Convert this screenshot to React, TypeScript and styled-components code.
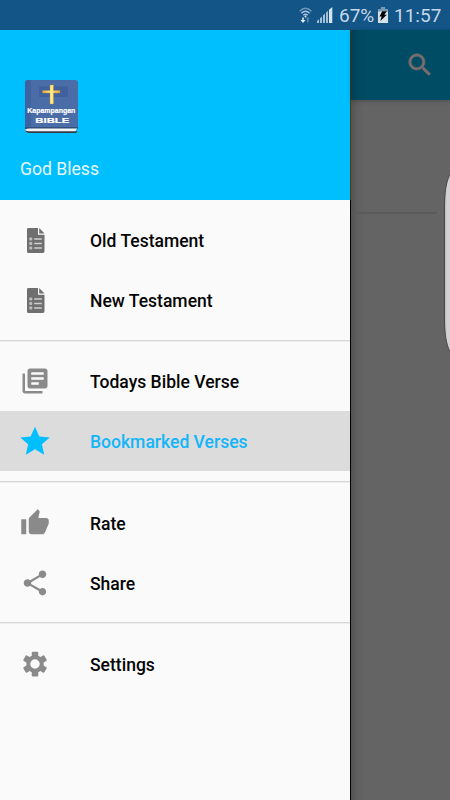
import React from 'react';
import styled, { createGlobalStyle } from 'styled-components';

const GlobalStyle = createGlobalStyle`
  *, *::before, *::after { box-sizing: border-box; }
  body { margin: 0; font-family: Roboto, sans-serif; background: #646464; }
`;

const Screen = styled.div`
  position: relative;
  display: flex;
  flex-direction: column;
  width: 450px;
  height: 800px;
  overflow: hidden;
  background: #646464;
`;

const StatusBar = styled.header`
  display: flex;
  flex: none;
  align-items: center;
  justify-content: flex-end;
  height: 30px;
  padding-right: 8px;
  background: #135586;
  color: #c6d8ea;
`;

const StatusText = styled.span<{ $width: number; $gap: number }>`
  width: ${(p) => p.$width}px;
  margin-left: ${(p) => p.$gap}px;
  font-size: 19px;
  line-height: 28px;
  padding-top: 2px;
  white-space: nowrap;
`;

const Glyph = styled.svg<{ $gap?: number }>`
  display: block;
  flex: none;
  margin-left: ${(p) => p.$gap ?? 0}px;
`;

const Body = styled.div`
  display: flex;
  flex: 1;
  min-height: 0;
`;

const Drawer = styled.nav`
  flex: none;
  width: 351px;
  border-right: 1px solid #000;
  background: #fafafa;
`;

const DrawerHeader = styled.div`
  display: flex;
  flex-direction: column;
  height: 170px;
  padding: 49px 20px 0;
  background: #00bfff;
  box-shadow: 1px 0 0 #4a3f10;
`;

const Greeting = styled.div`
  margin-top: 16px;
  color: #e8f8ff;
  font-size: 17.6px;
  line-height: 24px;
`;

const Group = styled.div`
  padding-top: 10px;
  height: 140px;
  & + & {
    height: 141px;
    border-top: 1px solid #d6d6d6;
    box-shadow: inset 0 1px 0 #ededed;
  }
  & + & + & {
    padding-top: 10.5px;
  }
`;

const Item = styled.a<{ $selected?: boolean }>`
  display: flex;
  align-items: center;
  height: 60px;
  padding-left: 20px;
  gap: 40px;
  background: ${(p) => (p.$selected ? '#dcdcdc' : 'transparent')};
  color: ${(p) => (p.$selected ? '#14b5fa' : '#050505')};
  font-size: 17.55px;
  font-weight: 500;
  line-height: 24px;

  svg {
    flex: none;
    color: ${(p) => (p.$selected ? '#00bfff' : '#8a8a8a')};
  }
  span { padding-top: 2px; }
`;

const Backdrop = styled.main`
  display: flex;
  flex: 1;
  flex-direction: column;
  background: linear-gradient(90deg, #535353 0, #606060 7px, #646464 14px);
`;

const AppBar = styled.div`
  display: flex;
  align-items: center;
  justify-content: flex-end;
  height: 70px;
  padding-right: 15px;
  background: linear-gradient(90deg, #003f54 0, #00485f 7px, #004c65 14px);
  box-shadow: 0 1px 4px rgba(0, 0, 0, 0.25);
  color: #776d6c;

  path {
    stroke: currentColor;
    stroke-width: 0.4;
  }
`;

const ListRule = styled.div`
  height: 2px;
  margin: 112px 13px 0 0;
  background: #5a5a5a;
`;

const EdgeHandle = styled.div`
  position: absolute;
  top: 171px;
  left: 444px;
  width: 24px;
  height: 184px;
  border: 1px solid #484848;
  border-radius: 10px / 34px;
  background: linear-gradient(90deg, #bcbcbc 0, #d2d2d2 2px);
`;

type IconName = 'list' | 'library' | 'star' | 'thumb' | 'share' | 'gear' | 'search';

const paths: Record<Exclude<IconName, 'list'>, string> = {
  library:
    'M4 6H2v14c0 1.1.9 2 2 2h14v-2H4V6zm16-4H8c-1.1 0-2 .9-2 2v12c0 1.1.9 2 2 2h12c1.1 0 2-.9 2-2V4c0-1.1-.9-2-2-2zm-1 9H9V9h10v2zm-4 4H9v-2h6v2zm4-8H9V5h10v2z',
  star: 'M12 .6l3.45 7.75 8.35.75-6.3 5.55 1.85 8.25L12 18.6l-7.35 4.3 1.85-8.25L.2 9.1l8.35-.75z',
  thumb:
    'M1 21h4V9H1v12zm22-11c0-1.1-.9-2-2-2h-6.31l.95-4.57.03-.32c0-.41-.17-.79-.44-1.06L14.17 1 7.59 7.59C7.22 7.95 7 8.45 7 9v10c0 1.1.9 2 2 2h9c.83 0 1.54-.5 1.84-1.22l3.02-7.05c.09-.23.14-.47.14-.73v-2z',
  share:
    'M18 16.08c-.76 0-1.44.3-1.96.77L8.91 12.7c.05-.23.09-.46.09-.7s-.04-.47-.09-.7l7.05-4.11c.54.5 1.25.81 2.04.81 1.66 0 3-1.34 3-3s-1.34-3-3-3-3 1.34-3 3c0 .24.04.47.09.7L8.04 9.81C7.5 9.31 6.79 9 6 9c-1.66 0-3 1.34-3 3s1.34 3 3 3c.79 0 1.5-.31 2.04-.81l7.12 4.16c-.05.21-.08.43-.08.65 0 1.61 1.31 2.92 2.92 2.92s2.92-1.31 2.92-2.92-1.31-2.92-2.92-2.92z',
  gear:
    'M9.4 5.4V2.9c0-.5.3-.8.8-.8h3.6c.5 0 .8.3.8.8v2.5l1.7 1 2.2-1.3c.4-.2.8-.1 1 .3l1.8 3.1c.2.4.1.8-.3 1l-2.1 1.3v2.4l2.1 1.3c.4.2.5.6.3 1l-1.8 3.1c-.2.4-.6.5-1 .3l-2.2-1.3-1.7 1v2.5c0 .5-.3.8-.8.8h-3.6c-.5 0-.8-.3-.8-.8v-2.5l-1.7-1-2.2 1.3c-.4.2-.8.1-1-.3l-1.8-3.1c-.2-.4-.1-.8.3-1l2.1-1.3v-2.4L3 9.5c-.4-.2-.5-.6-.3-1l1.8-3.1c.2-.4.6-.5 1-.3l2.2 1.3zM12 8.2a3.8 3.8 0 1 0 0 7.6 3.8 3.8 0 0 0 0-7.6z',
  search:
    'M15.5 14h-.79l-.28-.27C15.41 12.59 16 11.11 16 9.5 16 5.91 13.09 3 9.5 3S3 5.91 3 9.5 5.91 16 9.5 16c1.61 0 3.09-.59 4.23-1.57l.27.28v.79l5 4.99L20.49 19l-4.99-5zm-6 0C7.01 14 5 11.99 5 9.5S7.01 5 9.5 5 14 7.01 14 9.5 11.99 14 9.5 14z',
};

function Icon({ name }: { name: IconName }) {
  if (name === 'list') {
    return (
      <svg width="30" height="30" viewBox="0 0 30 30">
        <path fill="#6f6f6f" d="M8.3 3H18v6.8h6.5V26q0 2-1.6 2H8.5Q7 28 7 26.5V4.3Q7 3 8.3 3zM19.2 3l5.3 5.4h-5.3z" />
        <g fill="none" stroke="#d0d0d0" strokeWidth="1.3">
          <path d="M14.2 14h7.6M14.2 18.5h7.6M14.2 23h7.6" />
        </g>
        <g fill="#bdbdbd">
          <rect x="9.2" y="12.4" width="3.1" height="3.1" rx="1" />
          <rect x="9.2" y="16.9" width="3.1" height="3.1" rx="1" />
          <rect x="9.2" y="21.4" width="3.1" height="3.1" rx="1" />
        </g>
      </svg>
    );
  }
  return (
    <svg width="30" height="30" viewBox="0 0 24 24" fill="currentColor" fillRule="evenodd">
      <path d={paths[name]} />
    </svg>
  );
}

function BibleLogo() {
  return (
    <svg width="62" height="62" viewBox="0 0 62 62">
      <defs>
        <linearGradient id="gold" x1="0" x2="1">
          <stop offset="0" stopColor="#e9a83c" />
          <stop offset=".5" stopColor="#fff08c" />
          <stop offset="1" stopColor="#e2a23a" />
        </linearGradient>
      </defs>
      <path d="M8 1h47q3 0 3 3v46H5V4q0-3 3-3z" fill="#4a6da7" />
      <path d="M8 1h3v49H5V4q0-3 3-3z" fill="#3f639f" />
      <path d="M5 48h53l-2 3q-1 2 0 3H9q-4 0-4-4z" fill="#f4f4f4" />
      <path d="M5 48h53v1.5H10q-3 0-5 1z" fill="#315080" />
      <path d="M5 50q0 2.2 4 2.2h48.500l-1.500 1.800H9q-4 0-4-4z" fill="#363b49" />
      <rect x="19" y="7.5" width="29" height="10.5" fill="#40609e" />
      <path d="M30 6h3.5v5.500H40V14h-6.500v11H30V14h-7.500v-2.500H30z" fill="url(#gold)" stroke="#bd8d46" strokeWidth=".4" />
      <g fill="#fff" fontFamily="Liberation Sans, sans-serif" fontWeight="700" textAnchor="middle">
        <text x="31.3" y="34.4" fontSize="8" textLength="48" lengthAdjust="spacingAndGlyphs" stroke="#fff" strokeWidth=".2">Kapampangan</text>
        <text x="32.3" y="44.300" fontSize="7.500" textLength="34" lengthAdjust="spacingAndGlyphs" stroke="#fff" strokeWidth=".2">BIBLE</text>
      </g>
    </svg>
  );
}

function StatusIcons() {
  return (
    <>
      <Glyph width="13" height="17" viewBox="0 0 13 17">
        <g fill="none" stroke="#a9c4dc" strokeWidth="1.4">
          <path d="M.6 4.2Q6.5-1.5 12.4 4.2" opacity=".6" />
          <path d="M2.4 6.3Q6.5 2.3 10.6 6.3" />
          <path d="M4.3 8.3Q6.5 6.3 8.7 8.3" />
        </g>
        <circle cx="6.5" cy="9.5" r="1" fill="#dceaf5" />
        <path d="M3.2 10.5h1.6V13h1.7L4 16l-2.5-3h1.7z" fill="#dceaf5" />
        <path d="M8 15.5V12H6.8l2-2 2 2H9.6v3.5z" fill="#5685ac" />
      </Glyph>
      <Glyph $gap={5} width="16" height="16" viewBox="0 0 16 16" fill="#a4c0d9">
        <path d="M0 16v-2l2-1.8V16zM3 16v-4.7l2-1.9V16zM6 16V8.5l2-1.9V16zM9 16V5.7l2-1.9V16z" />
        <path d="M12 16V2.8L15.3 0v16z" fill="#d4e3f0" />
      </Glyph>
    </>
  );
}

function Battery() {
  return (
    <Glyph $gap={4} width="10" height="16" viewBox="0 0 10 16">
      <path d="M3 0h4v2h3v14H0V2h3z" fill="#d5e2e9" />
      <path d="M3 0h4v2h3v2.5H0V2h3z" fill="#789bb5" />
      <path d="M4.2 4.2h4.6L6.3 7.7h2.5L2.3 14l1.3-4.6H1.5z" fill="#000" />
    </Glyph>
  );
}

interface Entry {
  icon: IconName;
  label: string;
  selected?: boolean;
}

const groups: Entry[][] = [
  [
    { icon: 'list', label: 'Old Testament' },
    { icon: 'list', label: 'New Testament' },
  ],
  [
    { icon: 'library', label: 'Todays Bible Verse' },
    { icon: 'star', label: 'Bookmarked Verses', selected: true },
  ],
  [
    { icon: 'thumb', label: 'Rate' },
    { icon: 'share', label: 'Share' },
  ],
  [{ icon: 'gear', label: 'Settings' }],
];

export default function App() {
  return (
    <Screen>
      <GlobalStyle />
      <StatusBar>
        <StatusIcons />
        <StatusText $width={35} $gap={6}>67%</StatusText>
        <Battery />
        <StatusText $width={48} $gap={6}>11:57</StatusText>
      </StatusBar>
      <Body>
        <Drawer>
          <DrawerHeader>
            <BibleLogo />
            <Greeting>God Bless</Greeting>
          </DrawerHeader>
          {groups.map((group, index) => (
            <Group key={index}>
              {group.map((entry) => (
                <Item key={entry.label} $selected={entry.selected}>
                  <Icon name={entry.icon} />
                  <span>{entry.label}</span>
                </Item>
              ))}
            </Group>
          ))}
        </Drawer>
        <Backdrop>
          <AppBar>
            <Icon name="search" />
          </AppBar>
          <ListRule />
        </Backdrop>
      </Body>
      <EdgeHandle />
    </Screen>
  );
}
